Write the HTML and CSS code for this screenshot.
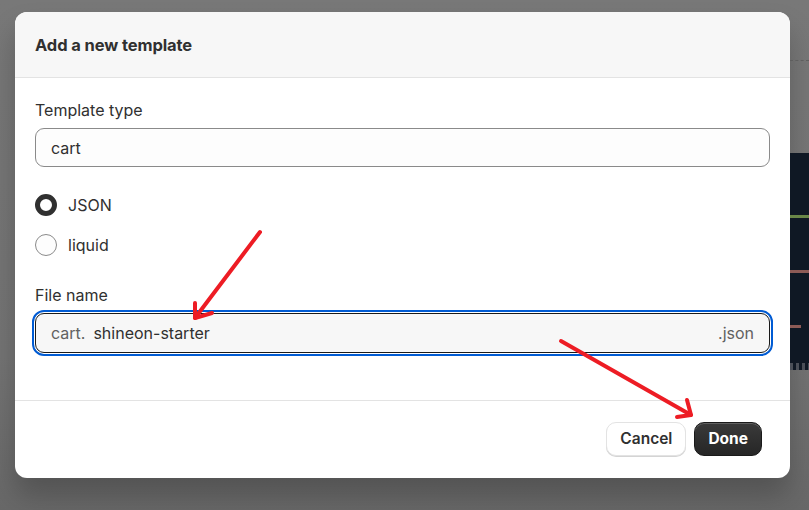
FILE: index.html
```html
<!DOCTYPE html>
<html lang="en">
<head>
  <meta charset="UTF-8" />
  <meta name="viewport" content="width=device-width, initial-scale=1.0"/>
  <title>Add a new template</title>
  <link rel="stylesheet" href="styles.css">
</head>
<body>
  <div class="modal">
    <div class="modal-header">
      <h2 class="modal-title">Add a new template</h2>
    </div>

    <div class="modal-body">
      <label class="label">Template type</label>
      <div class="field">cart</div>

      <div class="choices">
        <label class="choice">
          <span class="radio checked"></span>
          <span>JSON</span>
        </label>
        <label class="choice">
          <span class="radio"></span>
          <span>liquid</span>
        </label>
      </div>

      <label class="label">File name</label>
      <div class="field focused">
        <span class="prefix">cart.</span>
        <span class="value">shineon-starter</span>
        <span class="suffix">.json</span>
      </div>
    </div>

    <div class="modal-footer">
      <button class="btn">Cancel</button>
      <button class="btn primary">Done</button>
    </div>
  </div>

  <!-- bit of the editor peeking out behind the overlay -->
  <div class="peek">
    <div class="peek-dash"></div>
    <div class="peek-code">
      <div class="line green"></div>
      <div class="line red"></div>
      <div class="line red short"></div>
      <div class="checks"></div>
    </div>
  </div>

  <!-- red annotation arrows -->
  <svg class="arrows" width="809" height="510" viewBox="0 0 809 510">
    <g stroke="#ed1c24" stroke-width="4" stroke-linecap="round" stroke-linejoin="round" fill="none">
      <path d="M260 232 L195 318"/>
      <path d="M195 303 L195 318 L212 313"/>
      <path d="M561 341 L691 415"/>
      <path d="M687 400 L691 415 L677 417"/>
    </g>
  </svg>
</body>
</html>
```

FILE: styles.css
```css
* {
  box-sizing: border-box;
  margin: 0;
  padding: 0;
}

html, body {
  height: 100%;
  overflow: hidden;
}

body {
  position: relative;
  display: flex;
  align-items: flex-start;
  padding: 12px 0 0 15px;
  background: linear-gradient(180deg, #787878 0%, #747474 70%, #686868 100%);
  font-family: Inter, "Noto Sans", sans-serif;
  color: #303030;
  font-size: 16px;
}

.modal {
  width: 775px;
  height: 466px;
  background: #fff;
  border-radius: 12px;
  overflow: hidden;
  display: flex;
  flex-direction: column;
  box-shadow: 0 18px 28px rgba(0, 0, 0, 0.22);
  flex-shrink: 0;
}

.modal-header {
  height: 66px;
  background: #f7f7f7;
  border-bottom: 1px solid #e3e3e3;
  display: flex;
  align-items: center;
  padding: 0 20px;
}

.modal-title {
  font-size: 16.5px;
  font-weight: 650;
  letter-spacing: -0.1px;
}

.modal-body {
  padding: 22px 20px 0 20px;
  height: 323px;
  border-bottom: 1px solid #e3e3e3;
}

.label {
  display: block;
  font-size: 16px;
  line-height: 20px;
  margin-bottom: 8px;
}

.field {
  height: 39px;
  border: 1px solid #8a8a8a;
  border-radius: 9px;
  background: #fdfdfd;
  display: flex;
  align-items: center;
  padding: 0 15px;
  font-size: 16px;
}

.field.focused {
  height: 40px;
  margin-top: 8px;
  border: 1.5px solid #1a1a1a;
  background: #f7f7f7;
  outline: 2px solid #005bd3;
  outline-offset: 1px;
}

.prefix, .suffix {
  color: #616161;
}

.prefix {
  margin-right: 8px;
}

.suffix {
  margin-left: auto;
}

.choices {
  display: flex;
  flex-direction: column;
  gap: 18px;
  padding: 27px 0 29px;
}

.choice {
  display: flex;
  align-items: center;
  gap: 11px;
  height: 22px;
}

.radio {
  width: 22px;
  height: 22px;
  border-radius: 50%;
  border: 1px solid #8a8a8a;
  background: #fdfdfd;
}

.radio.checked {
  border: 5px solid #303030;
  background: #fff;
}

.modal-footer {
  flex: 1;
  display: flex;
  justify-content: flex-end;
  align-items: center;
  gap: 8px;
  padding: 0 28px 2px 0;
}

.btn {
  height: 34px;
  padding: 0 13px;
  border-radius: 10px;
  font-family: inherit;
  font-size: 15.5px;
  font-weight: 600;
  color: #303030;
  background: #fff;
  border: 1px solid #e3e3e3;
  box-shadow: 0 1px 0 #d4d4d4;
}

.btn.primary {
  padding: 0 13px;
  color: #fff;
  background: linear-gradient(180deg, #3a3a3a, #262626);
  border: 1px solid #1a1a1a;
  box-shadow: inset 0 1px 0 rgba(255, 255, 255, 0.2);
  font-weight: 700;
}

.peek {
  width: 19px;
  flex-shrink: 0;
}

.peek-dash {
  margin-top: 48px;
  border-top: 1px dashed #5e5e5e;
}

.peek-code {
  margin-top: 92px;
  height: 217px;
  background: #0f1824;
  display: flex;
  flex-direction: column;
}

.line {
  height: 3px;
}

.line.green {
  margin-top: 62px;
  background: #6a8748;
}

.line.red {
  margin-top: 52px;
  background: #8d5b56;
}

.line.short {
  width: 11px;
}

.checks {
  margin-top: auto;
  height: 7px;
  background: repeating-linear-gradient(90deg, #4a4f58 0 3px, #0f1824 3px 6px);
}

.arrows {
  position: absolute;
  left: 0;
  top: 0;
  pointer-events: none;
}
```
